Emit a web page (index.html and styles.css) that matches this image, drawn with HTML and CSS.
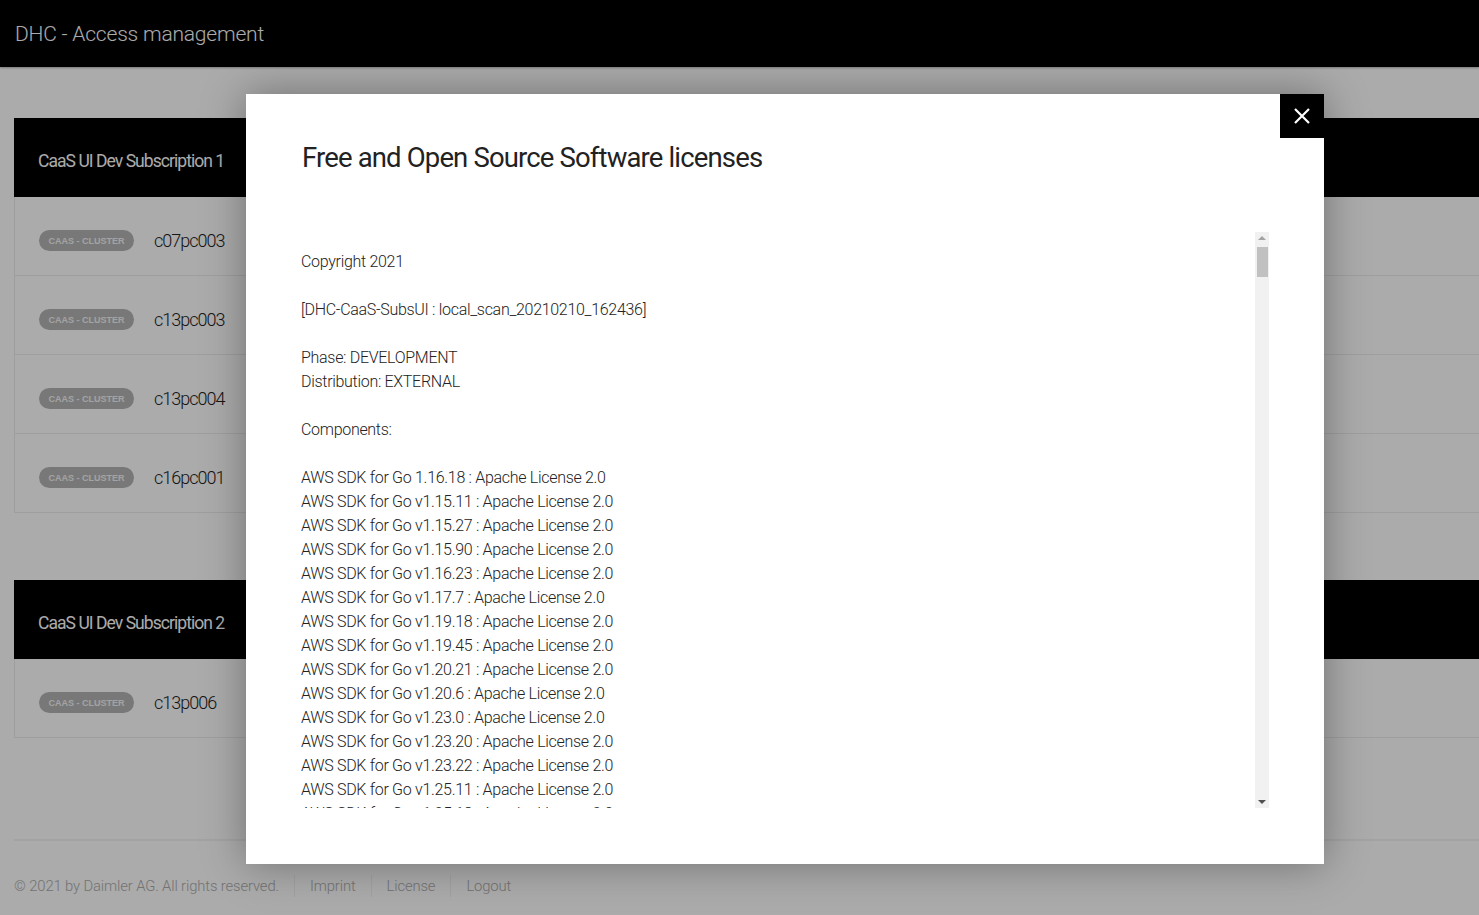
FILE: index.html
```html
<!DOCTYPE html>
<html lang="en">
<head>
<meta charset="utf-8">
<title>DHC - Access management</title>
<link rel="stylesheet" href="styles.css">
</head>
<body>
<header class="topbar">
  <span class="brand">DHC - Access management</span>
</header>

<main class="page">
  <section class="card">
    <div class="card-head">CaaS UI Dev Subscription 1</div>
    <div class="row"><span class="badge">CAAS - CLUSTER</span><span class="cluster">c07pc003</span></div>
    <div class="row"><span class="badge">CAAS - CLUSTER</span><span class="cluster">c13pc003</span></div>
    <div class="row"><span class="badge">CAAS - CLUSTER</span><span class="cluster">c13pc004</span></div>
    <div class="row"><span class="badge">CAAS - CLUSTER</span><span class="cluster">c16pc001</span></div>
  </section>

  <section class="card">
    <div class="card-head">CaaS UI Dev Subscription 2</div>
    <div class="row"><span class="badge">CAAS - CLUSTER</span><span class="cluster">c13p006</span></div>
  </section>

  <footer class="footer">
    <span class="foot-item first">© 2021 by Daimler AG. All rights reserved.</span>
    <a class="foot-item" href="#">Imprint</a>
    <a class="foot-item" href="#">License</a>
    <a class="foot-item" href="#">Logout</a>
  </footer>
</main>

<div class="overlay"></div>

<div class="modal" role="dialog">
  <button class="close" aria-label="Close">
    <svg width="18" height="18" viewBox="0 0 18 18"><path d="M2 2 L16 16 M16 2 L2 16" stroke="#fff" stroke-width="2.2" fill="none"/></svg>
  </button>
  <h2 class="modal-title">Free and Open Source Software licenses</h2>
  <div class="modal-body">
    <div class="license-text">
      <p>Copyright 2021</p>
      <p>[DHC-CaaS-SubsUI : local_scan_20210210_162436]</p>
      <p>Phase: DEVELOPMENT<br>Distribution: EXTERNAL</p>
      <p>Components:</p>
      <p>AWS SDK for Go 1.16.18 : Apache License 2.0<br>
AWS SDK for Go v1.15.11 : Apache License 2.0<br>
AWS SDK for Go v1.15.27 : Apache License 2.0<br>
AWS SDK for Go v1.15.90 : Apache License 2.0<br>
AWS SDK for Go v1.16.23 : Apache License 2.0<br>
AWS SDK for Go v1.17.7 : Apache License 2.0<br>
AWS SDK for Go v1.19.18 : Apache License 2.0<br>
AWS SDK for Go v1.19.45 : Apache License 2.0<br>
AWS SDK for Go v1.20.21 : Apache License 2.0<br>
AWS SDK for Go v1.20.6 : Apache License 2.0<br>
AWS SDK for Go v1.23.0 : Apache License 2.0<br>
AWS SDK for Go v1.23.20 : Apache License 2.0<br>
AWS SDK for Go v1.23.22 : Apache License 2.0<br>
AWS SDK for Go v1.25.11 : Apache License 2.0<br>
AWS SDK for Go v1.25.18 : Apache License 2.0</p>
    </div>
    <div class="scrollbar">
      <span class="arrow up"></span>
      <span class="thumb"></span>
      <span class="track-fill"></span>
      <span class="arrow down"></span>
    </div>
  </div>
</div>
</body>
</html>
```

FILE: styles.css
```css
* { box-sizing: border-box; }

html, body {
  margin: 0;
  padding: 0;
  background: #fff;
  overflow: hidden;
}

body {
  font-family: Roboto, "Liberation Sans", sans-serif;
  color: #222;
  height: 915px;
  position: relative;
}

.topbar {
  height: 67px;
  background: #000;
  padding-left: 15px;
  display: flex;
  align-items: center;
  box-shadow: 0 1px 2px rgba(0,0,0,0.3);
}

.brand {
  color: #fff;
  font-size: 21px;
  font-weight: 300;
  letter-spacing: -0.2px;
}

.page {
  padding: 51px 0 0 14px;
}

.card + .card {
  margin-top: 67px;
}

.card-head {
  height: 79px;
  background: #000;
  color: #fff;
  font-size: 17.5px;
  letter-spacing: -0.95px;
  padding: 6px 0 0 24px;
  display: flex;
  align-items: center;
}

.row {
  height: 79px;
  border-left: 1px solid #ececec;
  border-bottom: 1px solid #ececec;
  padding: 9px 0 0 24px;
  display: flex;
  align-items: center;
  gap: 20px;
}

.badge {
  display: inline-flex;
  align-items: center;
  justify-content: center;
  width: 95px;
  height: 21px;
  border-radius: 11px;
  background: #b3b3b3;
  color: #f4f4f4;
  font-family: "Liberation Sans", Arial, sans-serif;
  font-size: 9px;
  font-weight: 700;
}

.cluster {
  font-size: 18px;
  font-weight: 300;
  letter-spacing: -1px;
  color: #222;
}

.footer {
  margin-top: 101px;
  border-top: 2px solid #f2f2f2;
  padding-top: 34px;
  display: flex;
  align-items: center;
  font-size: 14.8px;
  font-weight: 300;
  letter-spacing: -0.12px;
}

.foot-item {
  color: #acacac;
  text-decoration: none;
  padding: 0 15px;
  border-left: 1px solid #f0f0f0;
  line-height: 22px;
}

.foot-item.first {
  padding-left: 0;
  border-left: none;
}

.overlay {
  position: absolute;
  inset: 0;
  background: rgba(0,0,0,0.33);
}

.modal {
  position: absolute;
  top: 94px;
  left: 246px;
  width: 1078px;
  height: 770px;
  background: #fff;
  padding: 46px 55px 56px 55px;
  box-shadow: 0 0 40px rgba(0,0,0,0.35);
  display: flex;
  flex-direction: column;
}

.close {
  position: absolute;
  top: 0;
  right: 0;
  width: 44px;
  height: 44px;
  background: #000;
  border: none;
  padding: 0;
  display: flex;
  align-items: center;
  justify-content: center;
  cursor: pointer;
}

.modal-title {
  margin: 0 0 0 1px;
  font-size: 27.5px;
  line-height: 36px;
  font-weight: 400;
  color: #222;
  letter-spacing: -0.85px;
}

.modal-body {
  margin-top: 56px;
  flex: 1;
  display: flex;
  overflow: hidden;
}

.license-text {
  flex: 1;
  overflow: hidden;
  padding-top: 18px;
  font-size: 16px;
  line-height: 24px;
  font-weight: 300;
  color: #222;
  letter-spacing: -0.3px;
}

.license-text p {
  margin: 0 0 24px 0;
}

.scrollbar {
  width: 14px;
  background: #f1f1f1;
  display: flex;
  flex-direction: column;
  align-items: center;
}

.arrow {
  width: 0;
  height: 0;
  border-left: 4px solid transparent;
  border-right: 4px solid transparent;
}

.arrow.up {
  margin-top: 4px;
  border-bottom: 4px solid #a3a3a3;
}

.arrow.down {
  margin-bottom: 4px;
  border-top: 4px solid #505050;
}

.thumb {
  margin-top: 7px;
  width: 11px;
  height: 30px;
  background: #c1c1c1;
}

.track-fill {
  flex: 1;
}
```
